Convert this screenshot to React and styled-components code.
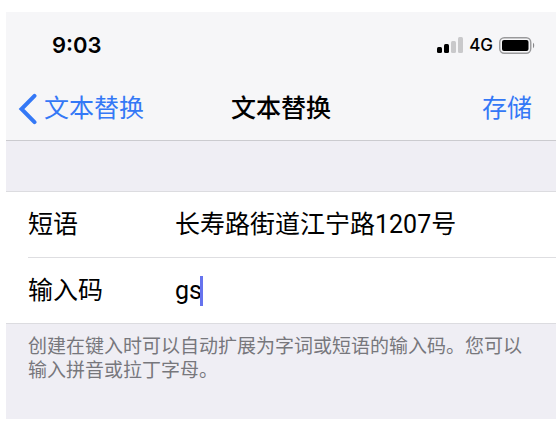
import React, { useState } from 'react';
import styled, { createGlobalStyle } from 'styled-components';

const GlobalStyle = createGlobalStyle`
  * {
    box-sizing: border-box;
  }

  body {
    margin: 0;
    background: #fff;
    color: #000;
    font-family: Roboto, "Noto Sans CJK SC", sans-serif;
    font-size: 25px;
    line-height: 32px;
  }
`;

const Screen = styled.main`
  margin: 12px 3px 6px 6px;
  padding-bottom: 36px;
  background: #efeef4;
`;

const Header = styled.header`
  background: #f6f6f8;
  border-bottom: 1px solid #cbcbcf;
`;

const StatusBar = styled.div`
  display: flex;
  align-items: center;
  justify-content: space-between;
  height: 66px;
  padding: 0 21px 0 46px;
  font-family: Inter, sans-serif;
`;

const Time = styled.time`
  font-size: 22px;
  font-weight: 600;
`;

const StatusIcons = styled.div`
  display: flex;
  align-items: center;
  gap: 6px;
`;

const Network = styled.span`
  font-size: 17px;
  font-weight: 500;
`;

const NavBar = styled.nav`
  display: grid;
  grid-template-columns: 1fr auto 1fr;
  align-items: center;
  height: 62px;
  padding: 0 12px;
`;

const NavButton = styled.button`
  display: flex;
  align-items: center;
  gap: 6px;
  justify-self: ${({ $end }) => ($end ? 'end' : 'start')};
  padding: ${({ $end }) => ($end ? '0 12px' : '0')};
  border: 0;
  background: none;
  color: #3478f6;
  font: inherit;
`;

const Title = styled.h1`
  margin: 0;
  font-size: 25px;
  font-weight: 500;
`;

const Group = styled.div`
  margin-top: 50px;
  padding-left: 22px;
  background: #fff;
  border-top: 1px solid #dcdce0;
  border-bottom: 1px solid #dcdce0;
`;

const Row = styled.div`
  display: grid;
  grid-template-columns: 147px 1fr;
  align-items: center;
  height: 65px;

  & + & {
    height: 66px;
    border-top: 1px solid #dedee1;
  }
`;

const Field = styled.div`
  display: flex;
  align-items: center;
`;

const Input = styled.input`
  width: ${({ $fit }) => ($fit ? 'auto' : '100%')};
  height: 32px;
  field-sizing: ${({ $fit }) => ($fit ? 'content' : 'fixed')};
  padding: 0;
  border: 0;
  outline: 0;
  background: none;
  color: inherit;
  caret-color: transparent;
  font: inherit;
`;

const Caret = styled.span`
  width: 3px;
  height: 30px;
  margin-left: -2px;
  background: #6673ee;
`;

const Hint = styled.p`
  margin: 0;
  padding: 11px 22px 0;
  color: #77777c;
  font-size: 19px;
  line-height: 24px;
`;

const Signal = () => (
  <svg width="26" height="16" viewBox="0 0 26 16" aria-hidden="true">
    <rect x="0" y="10" width="5" height="6" rx="1.5" />
    <rect x="7" y="7" width="5" height="9" rx="1.5" />
    <rect x="14" y="4" width="5" height="12" rx="1.5" fill="#c9c9cb" />
    <rect x="21" y="0" width="5" height="16" rx="1.5" fill="#c9c9cb" />
  </svg>
);

const Battery = () => (
  <svg width="36" height="17" viewBox="0 0 36 17" aria-hidden="true">
    <rect x="0.75" y="0.75" width="31" height="15.5" rx="4.5" fill="none" stroke="#99999b" strokeWidth="1.4" />
    <rect x="3" y="3" width="26.5" height="11" rx="2" />
    <path d="M34 5.8c1.6.7 1.6 4.7 0 5.4z" fill="#88888a" />
  </svg>
);

const BackIcon = () => (
  <svg width="20" height="32" viewBox="0 0 20 32" aria-hidden="true">
    <path d="M16.5 2.8 3.5 16l13 13.2" fill="none" stroke="currentColor" strokeWidth="4" strokeLinecap="round" />
  </svg>
);

const App = () => {
  const [phrase, setPhrase] = useState('长寿路街道江宁路1207号');
  const [shortcut, setShortcut] = useState('gs');

  return (
    <>
      <GlobalStyle />
      <Screen lang="zh-CN">
        <Header>
          <StatusBar>
            <Time>9:03</Time>
            <StatusIcons>
              <Signal />
              <Network>4G</Network>
              <Battery />
            </StatusIcons>
          </StatusBar>
          <NavBar>
            <NavButton type="button">
              <BackIcon />
              文本替换
            </NavButton>
            <Title>文本替换</Title>
            <NavButton type="button" $end>存储</NavButton>
          </NavBar>
        </Header>
        <Group>
          <Row>
            <label htmlFor="phrase">短语</label>
            <Input
              id="phrase"
              value={phrase}
              onChange={(e) => setPhrase(e.target.value)}
            />
          </Row>
          <Row>
            <label htmlFor="shortcut">输入码</label>
            <Field>
              <Input
                id="shortcut"
                $fit
                value={shortcut}
                onChange={(e) => setShortcut(e.target.value)}
              />
              <Caret />
            </Field>
          </Row>
        </Group>
        <Hint>创建在键入时可以自动扩展为字词或短语的输入码。您可以输入拼音或拉丁字母。</Hint>
      </Screen>
    </>
  );
};

export default App;
